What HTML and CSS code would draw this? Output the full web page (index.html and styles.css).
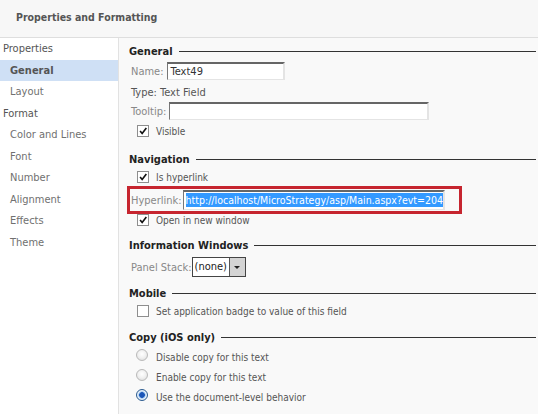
FILE: index.html
```html
<!DOCTYPE html>
<html lang="en">
<head>
    <meta charset="UTF-8">
    <title>Properties and Formatting</title>
    <link rel="stylesheet" href="styles.css">
</head>
<body>
    <div class="header">Properties and Formatting</div>
    <div class="main">
        <!-- left navigation -->
        <ul class="sidebar">
            <li class="group">Properties</li>
            <li class="item selected">General</li>
            <li class="item">Layout</li>
            <li class="group">Format</li>
            <li class="item">Color and Lines</li>
            <li class="item">Font</li>
            <li class="item">Number</li>
            <li class="item">Alignment</li>
            <li class="item">Effects</li>
            <li class="item">Theme</li>
        </ul>

        <div class="content">
            <div class="legend first">General</div>
            <div class="row row-name">
                <span class="label">Name:</span>
                <span class="textbox name-box">Text49</span>
            </div>
            <div class="row row-type">Type: Text Field</div>
            <div class="row row-tip">
                <span class="label">Tooltip:</span>
                <span class="textbox tip-box"></span>
            </div>
            <div class="row check-row">
                <span class="check on"><svg viewBox="0 0 12 12"><path d="M2.5 6 L5 9 L10 2.5" fill="none" stroke="#111" stroke-width="2"/></svg></span>
                Visible
            </div>

            <div class="legend nav">Navigation</div>
            <div class="row check-row short">
                <span class="check on"><svg viewBox="0 0 12 12"><path d="M2.5 6 L5 9 L10 2.5" fill="none" stroke="#111" stroke-width="2"/></svg></span>
                Is hyperlink
            </div>
            <div class="link-box">
                <span class="label">Hyperlink:</span>
                <span class="textbox link-input"><span class="sel">http://localhost/MicroStrategy/asp/Main.aspx?evt=204</span></span>
            </div>
            <div class="row check-row short after-link">
                <span class="check on"><svg viewBox="0 0 12 12"><path d="M2.5 6 L5 9 L10 2.5" fill="none" stroke="#111" stroke-width="2"/></svg></span>
                Open in new window
            </div>

            <div class="legend info">Information Windows</div>
            <div class="row row-panel">
                <span class="label">Panel Stack:</span>
                <span class="dropdown">
                    <span class="dd-value">(none)</span>
                    <span class="dd-btn"><span class="arrow"></span></span>
                </span>
            </div>

            <div class="legend mobile">Mobile</div>
            <div class="row check-row short">
                <span class="check"></span>
                Set application badge to value of this field
            </div>

            <div class="legend copy">Copy (iOS only)</div>
            <div class="row radio-row first-radio"><span class="radio"></span>Disable copy for this text</div>
            <div class="row radio-row"><span class="radio"></span>Enable copy for this text</div>
            <div class="row radio-row"><span class="radio on"></span>Use the document-level behavior</div>
        </div>
    </div>
</body>
</html>
```

FILE: styles.css
```css
body {
    margin: 0;
    font-family: "DejaVu Sans Condensed", "DejaVu Sans", sans-serif;
    font-size: 11px;
    color: #555;
    width: 538px;
    height: 414px;
    overflow: hidden;
    background: #f9f9f9;
}

.header {
    height: 37px;
    line-height: 35px;
    padding-left: 16px;
    font-size: 10.5px;
    font-weight: bold;
    color: #555;
    background: #f7f7f7;
    border-bottom: 1px solid #dedede;
}

.main {
    display: flex;
    height: 376px;
}

.sidebar {
    list-style: none;
    margin: 0;
    padding: 0;
    width: 118px;
    background: #fff;
    border-right: 1px solid #e2e2e2;
}
.sidebar li {
    height: 21.5px;
    line-height: 21.5px;
}
.sidebar .group {
    padding-left: 3px;
    color: #555;
}
.sidebar .item {
    padding-left: 10px;
    color: #707070;
}
.sidebar .selected {
    background: #cfe0f5;
    font-weight: bold;
    color: #555;
}

.content {
    flex: 1;
    padding: 4px 2px 0 10px;
    color: #555;
}

.legend {
    display: flex;
    align-items: center;
    height: 18px;
    font-weight: bold;
    color: #222;
}
.legend::after {
    content: "";
    flex: 1;
    border-top: 1px solid #333;
    margin-left: 6px;
}
.legend.nav { margin-top: 9px; }
.legend.info { margin-top: 7px; }
.legend.mobile { margin-top: 6px; }
.legend.copy { margin-top: 8px; }

.row {
    display: flex;
    align-items: center;
    height: 20px;
    padding-left: 2px;
}
.row-name { height: 22px; }
.row-type { height: 18px; margin-top: 1px; color: #555; }
.row-tip { height: 20px; }
.row-panel { height: 22px; padding-top: 2px; }
.row.short { height: 18px; }

.label {
    color: #888;
    margin-right: 3px;
}
.link-box .label { margin-right: 1px; }
.row-panel .label { margin-right: 0; }

.textbox {
    display: block;
    box-sizing: border-box;
    height: 18px;
    line-height: 15px;
    padding-left: 3px;
    background: #fff;
    border-top: 2px solid #666;
    border-left: 1px solid #777;
    border-right: 2px solid #e4e4e4;
    border-bottom: 1px solid #e4e4e4;
    color: #333;
}
.name-box { width: 118px; }
.tip-box { width: 260px; }

/* checkbox and radio captions are set a size smaller */
.check-row,
.radio-row {
    font-size: 10px;
}
.check-row {
    padding-left: 8px;
}
.check {
    display: block;
    box-sizing: border-box;
    width: 12px;
    height: 12px;
    margin-right: 7px;
    background: #fff;
    border: 1px solid #8e8e8e;
}
.check svg {
    display: block;
    width: 10px;
    height: 10px;
}

/* the highlighted hyperlink field */
.link-box {
    display: flex;
    align-items: center;
    box-sizing: border-box;
    width: 335px;
    height: 28px;
    margin-left: -2px;
    padding-left: 1px;
    border: 3px solid #c6252f;
}
.link-input {
    width: 262px;
    height: 20px;
    overflow: hidden;
    white-space: nowrap;
    padding-left: 2px;
    font-size: 10.5px;
    line-height: 17px;
}
.sel {
    background: #3399ff;
    color: #fff;
    padding: 1px 0;
}
.after-link { margin-top: -3px; }

.dropdown {
    display: flex;
    box-sizing: border-box;
    height: 20px;
    border: 1px solid #444;
    background: #fff;
}
.dd-value {
    padding: 0 2px;
    line-height: 18px;
    color: #222;
}
.dd-btn {
    display: flex;
    align-items: center;
    justify-content: center;
    width: 15px;
    background: #d4d4d4;
    border-left: 1px solid #555;
}
.arrow {
    width: 0;
    height: 0;
    border-left: 3px solid transparent;
    border-right: 3px solid transparent;
    border-top: 3px solid #222;
}

.radio-row {
    padding-left: 7px;
}
.first-radio { margin-top: 1px; }
.radio {
    display: block;
    box-sizing: border-box;
    width: 12px;
    height: 12px;
    margin-right: 8px;
    margin-top: -4px;
    border-radius: 50%;
    border: 1px solid #b9b9b9;
    background: radial-gradient(circle at 50% 40%, #fff 0%, #f0f0f0 50%, #d8d8d8 100%);
}
.radio.on {
    border-color: #2b5b8f;
    background: radial-gradient(circle, #1b56b8 0 2.5px, #7fb0e8 3px, #e8f2fc 4px, #cfdff0 100%);
}
```
